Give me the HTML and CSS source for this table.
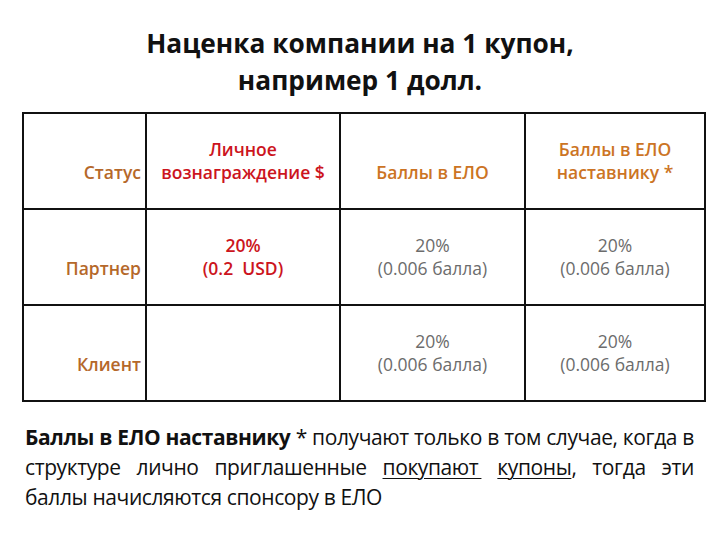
FILE: index.html
```html
<!DOCTYPE html>
<html lang="ru">
<head>
<meta charset="utf-8">
<link rel="stylesheet" href="styles.css">
</head>
<body>
<div class="page">
  <h1 class="title">Наценка компании на 1 купон,<br>например 1 долл.</h1>
  <table class="grid">
    <colgroup>
      <col class="c1"><col class="c2"><col class="c3"><col class="c4">
    </colgroup>
    <tr>
      <td class="status">Статус</td>
      <td class="red">Личное<br>вознаграждение $</td>
      <td class="orange">Баллы в ЕЛО</td>
      <td class="orange">Баллы в ЕЛО<br>наставнику *</td>
    </tr>
    <tr>
      <td class="status">Партнер</td>
      <td class="red">20%<br>(0.2&nbsp; USD)</td>
      <td class="gray">20%<br>(0.006 балла)</td>
      <td class="gray">20%<br>(0.006 балла)</td>
    </tr>
    <tr>
      <td class="status">Клиент</td>
      <td></td>
      <td class="gray">20%<br>(0.006 балла)</td>
      <td class="gray">20%<br>(0.006 балла)</td>
    </tr>
  </table>
  <p class="note">
    <span class="line full"><b>Баллы в ЕЛО наставнику</b> * получают только в том случае, когда в</span>
    <span class="line full">структуре лично приглашенные <u>покупают&#8201;</u> <u>купоны</u>, тогда эти</span>
    <span class="line">баллы начисляются спонсору в ЕЛО</span>
  </p>
</div>
</body>
</html>
```
FILE: styles.css
```css
html, body {
  margin: 0;
  padding: 0;
  background: #ffffff;
}
.page {
  width: 720px;
  height: 540px;
  box-sizing: border-box;
  padding: 25px 0 0 22px;
  font-family: "Open Sans", "Noto Sans", sans-serif;
}
.title {
  margin: 0 0 13px 0;
  width: 676px;
  text-align: center;
  font-size: 26.3px;
  line-height: 37px;
  font-weight: 700;
  color: #111;
  letter-spacing: 0;
}
.grid {
  border-collapse: collapse;
  table-layout: fixed;
  width: 682px;
}
.c1 { width: 123px; }
.c2 { width: 194px; }
.c3 { width: 185px; }
.c4 { width: 180px; }
.grid td {
  border: 2px solid #111;
  height: 96px;
  box-sizing: border-box;
  padding: 0 4px 24px 4px;
  vertical-align: bottom;
  text-align: center;
  font-size: 17.5px;
  line-height: 23px;
  letter-spacing: 0;
}
.grid td.status {
  text-align: right;
  color: #b5682a;
  font-weight: 600;
}
.red { color: #cc1420; font-weight: 600; }
.orange { color: #cc7424; font-weight: 600; }
.gray { color: #6c6c6c; }
.note {
  margin: 20px 0 0 3px;
  width: 669px;
  font-size: 21px;
  line-height: 30px;
  color: #111;
  letter-spacing: -0.4px;
}
.line {
  display: block;
  white-space: nowrap;
  text-align: left;
}
.line.full {
  text-align: justify;
  text-align-last: justify;
}
.note u {
  text-decoration-thickness: 1px;
  text-underline-offset: 3px;
}
```
